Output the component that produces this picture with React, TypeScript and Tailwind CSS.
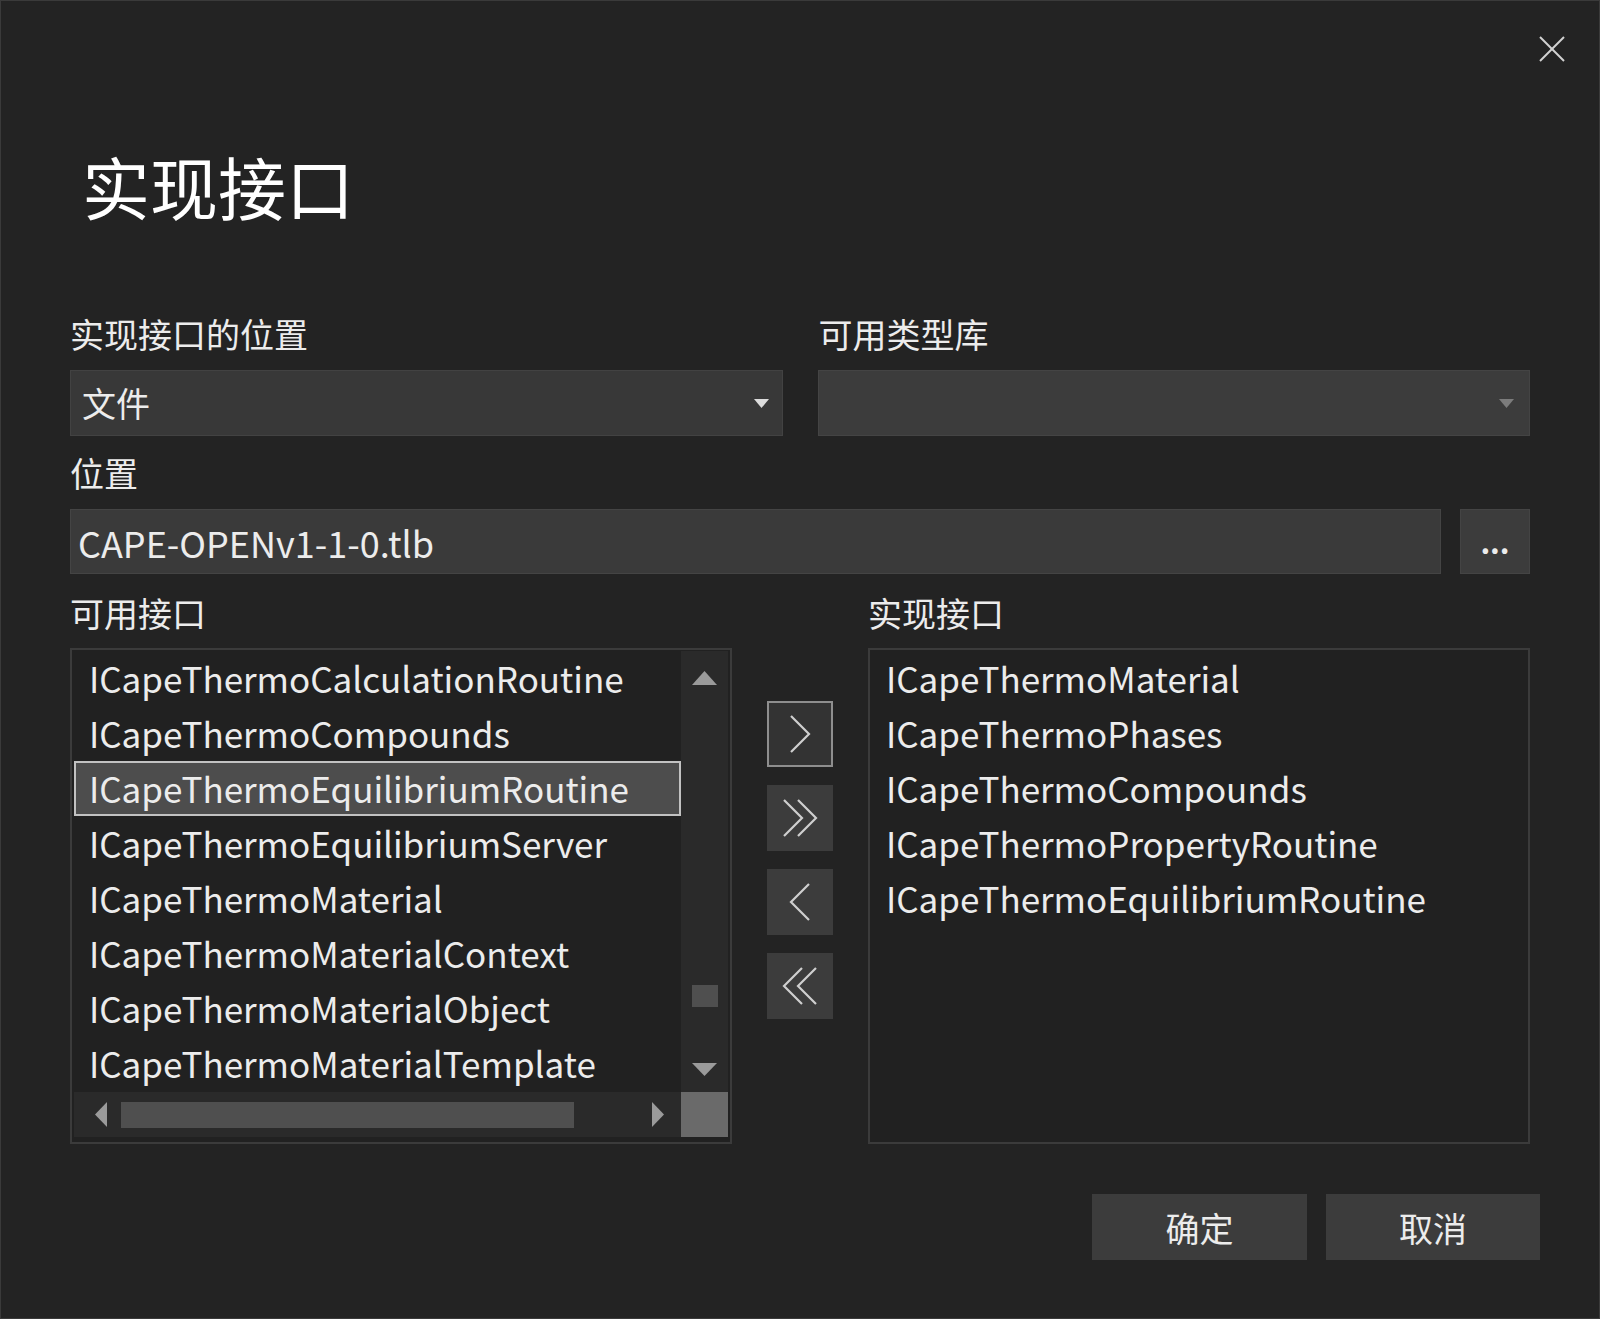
import React from 'react';

const available = [
  'ICapeThermoCalculationRoutine',
  'ICapeThermoCompounds',
  'ICapeThermoEquilibriumRoutine',
  'ICapeThermoEquilibriumServer',
  'ICapeThermoMaterial',
  'ICapeThermoMaterialContext',
  'ICapeThermoMaterialObject',
  'ICapeThermoMaterialTemplate',
];

const implemented = [
  'ICapeThermoMaterial',
  'ICapeThermoPhases',
  'ICapeThermoCompounds',
  'ICapeThermoPropertyRoutine',
  'ICapeThermoEquilibriumRoutine',
];

// chevron glyphs for the move buttons
const Chevron = ({ dir, double }: { dir: 'left' | 'right'; double?: boolean }) => {
  const one = dir === 'right' ? '2,1 20,19 2,37' : '20,1 2,19 20,37';
  const two = dir === 'right' ? '16,1 34,19 16,37' : '34,1 16,19 34,37';
  return (
    <svg width={double ? 36 : 22} height="38" viewBox={double ? '0 0 36 38' : '0 0 22 38'} fill="none" stroke="#cfcfcf" strokeWidth="2.2">
      <polyline points={one} />
      {double && <polyline points={two} />}
    </svg>
  );
};

const Caret = ({ color }: { color: string }) => (
  <svg width="15" height="9" viewBox="0 0 15 9">
    <polygon points="0,0 15,0 7.5,9" fill={color} />
  </svg>
);

export default function App() {
  return (
    <div className="w-[1600px] h-[1319px] bg-[#232323] border border-[#3a3a3a] relative overflow-hidden text-[#ececec] font-['Noto_Sans_CJK_SC','Noto_Sans',sans-serif]">
      {/* close */}
      <button className="absolute top-[35px] right-[34px] w-[26px] h-[26px] flex items-center justify-center">
        <svg width="26" height="26" viewBox="0 0 26 26" stroke="#d2d2d2" strokeWidth="2">
          <line x1="1" y1="1" x2="25" y2="25" />
          <line x1="25" y1="1" x2="1" y2="25" />
        </svg>
      </button>

      <div className="px-[69px]">
        <h1 className="mt-[145px] h-[80px] leading-[80px] text-[68px] pl-[12px] text-white">实现接口</h1>

        {/* location + type library */}
        <div className="mt-[88px] grid grid-cols-2 gap-x-[35px]">
          <div>
            <div className="h-[40px] leading-[40px] text-[34px]">实现接口的位置</div>
            <div className="mt-[16px] h-[66px] bg-[#383838] border border-[#424242] flex items-center justify-between pl-[11px] pr-[13px]">
              <span className="text-[34px] leading-none">文件</span>
              <Caret color="#dcdcdc" />
            </div>
          </div>
          <div>
            <div className="h-[40px] leading-[40px] text-[34px] pl-[1px]">可用类型库</div>
            <div className="mt-[16px] h-[66px] bg-[#3c3c3c] border border-[#444444] flex items-center justify-end pr-[15px]">
              <Caret color="#7c7c7c" />
            </div>
          </div>
        </div>

        <div className="mt-[17px] h-[40px] leading-[40px] text-[34px]">位置</div>
        <div className="mt-[16px] flex gap-[19px] h-[65px]">
          <div className="flex-1 bg-[#3a3a3a] border border-[#444444] flex items-center pl-[7px] text-[36px]">
            CAPE-OPENv1-1-0.tlb
          </div>
          <button className="w-[70px] bg-[#3c3c3c] border border-[#444444] flex items-center justify-center text-[30px] font-bold">
            ...
          </button>
        </div>

        {/* list headers */}
        <div className="mt-[19px] flex h-[40px] leading-[40px] text-[34px]">
          <div className="w-[798px]">可用接口</div>
          <div>实现接口</div>
        </div>

        {/* lists */}
        <div className="mt-[15px] flex gap-[35px]">
          <div className="w-[662px] h-[496px] border-2 border-[#3b3b3b] bg-[#212121] pt-[1px] pb-[5px] px-[2px] flex flex-col">
            <div className="flex flex-1">
              <div className="flex-1 flex flex-col text-[35px]">
                {available.map((name, i) =>
                  i === 2 ? (
                    <div key={name} className="h-[55px] bg-[#4d4d4d] border-2 border-[#c2c2c2] pl-[13px] flex items-center whitespace-nowrap">
                      {name}
                    </div>
                  ) : (
                    <div key={name} className="h-[55px] pl-[15px] flex items-center whitespace-nowrap">
                      {name}
                    </div>
                  )
                )}
              </div>
              <div className="w-[47px] bg-[#2a2a2a] flex flex-col items-center">
                <svg className="mt-[20px]" width="25" height="14" viewBox="0 0 25 14">
                  <polygon points="12.5,0 25,14 0,14" fill="#9a9a9a" />
                </svg>
                <div className="mt-[300px] w-[26px] h-[22px] bg-[#4f4f4f]" />
                <svg className="mt-[56px]" width="25" height="13" viewBox="0 0 25 13">
                  <polygon points="0,0 25,0 12.5,13" fill="#9a9a9a" />
                </svg>
              </div>
            </div>
            <div className="h-[45px] flex">
              <div className="flex-1 bg-[#2a2a2a] flex items-center pl-[21px] pr-[17px]">
                <svg width="12" height="25" viewBox="0 0 12 25">
                  <polygon points="12,0 12,25 0,12.5" fill="#9a9a9a" />
                </svg>
                <div className="ml-[14px] w-[453px] h-[26px] bg-[#4f4f4f]" />
                <div className="flex-1" />
                <svg width="12" height="25" viewBox="0 0 12 25">
                  <polygon points="0,0 0,25 12,12.5" fill="#9a9a9a" />
                </svg>
              </div>
              <div className="w-[47px] bg-[#6a6a6a]" />
            </div>
          </div>

          <div className="w-[66px] pt-[53px] flex flex-col gap-[18px]">
            <button className="h-[66px] bg-[#333333] border-2 border-[#8e8e8e] flex items-center justify-center">
              <Chevron dir="right" />
            </button>
            <button className="h-[66px] bg-[#3c3c3c] flex items-center justify-center">
              <Chevron dir="right" double />
            </button>
            <button className="h-[66px] bg-[#3c3c3c] flex items-center justify-center">
              <Chevron dir="left" />
            </button>
            <button className="h-[66px] bg-[#3c3c3c] flex items-center justify-center">
              <Chevron dir="left" double />
            </button>
          </div>

          <div className="flex-1 h-[496px] border-2 border-[#3b3b3b] bg-[#212121] pt-[1px] px-[2px] flex flex-col text-[35px]">
            {implemented.map((name) => (
              <div key={name} className="h-[55px] pl-[14px] flex items-center whitespace-nowrap">
                {name}
              </div>
            ))}
          </div>
        </div>

        {/* footer */}
        <div className="mt-[50px] -mr-[10px] flex justify-end gap-[19px]">
          <button className="w-[215px] h-[66px] bg-[#3c3c3c] text-[34px] flex items-center justify-center">确定</button>
          <button className="w-[214px] h-[66px] bg-[#3c3c3c] text-[34px] flex items-center justify-center">取消</button>
        </div>
      </div>
    </div>
  );
}
